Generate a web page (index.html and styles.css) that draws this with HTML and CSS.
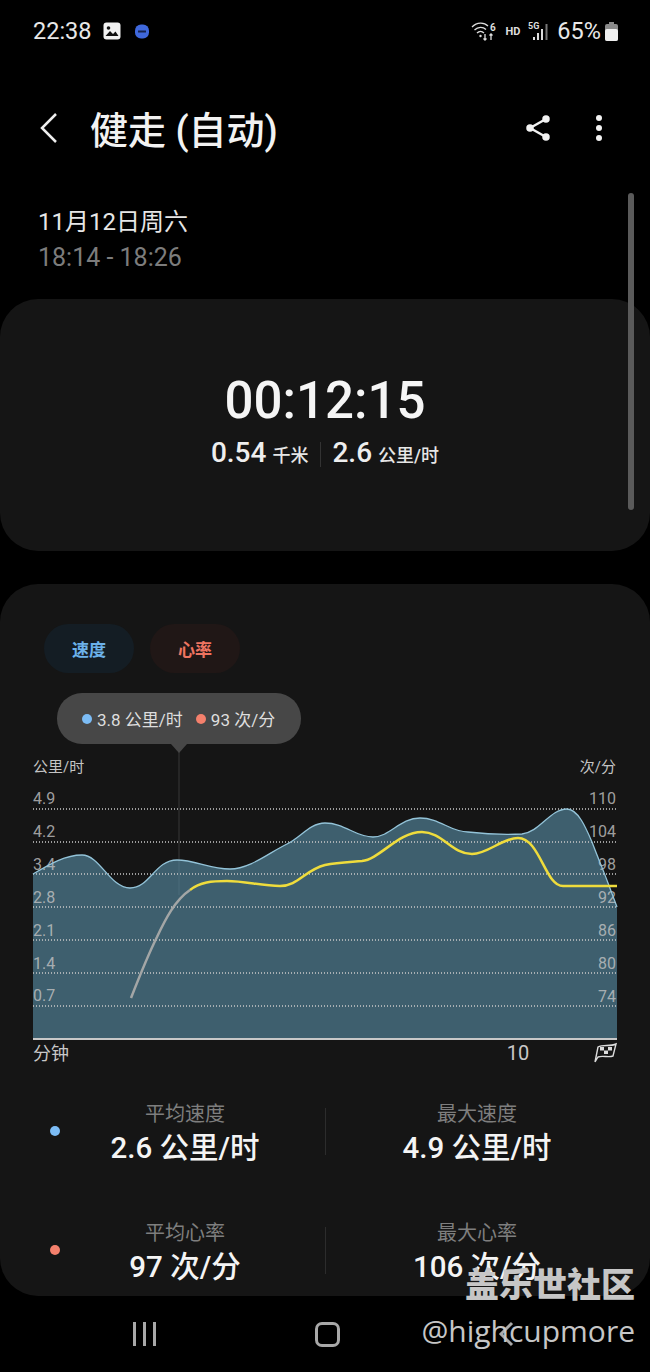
FILE: index.html
```html
<!DOCTYPE html>
<html lang="zh-CN">
<head>
    <meta charset="UTF-8">
    <meta name="viewport" content="width=device-width, initial-scale=1.0">
    <title>健走 (自动)</title>
    <link rel="stylesheet" href="styles.css">
</head>
<body>
    <div class="status-bar">
        <div class="status-left">
            <span class="status-text">22:38</span>
            <svg class="icon-gallery" width="18" height="18" viewBox="0 0 18 18">
                <rect x="0.5" y="0.5" width="17" height="17" rx="3" fill="#f2f2f2"/>
                <circle cx="5.5" cy="6" r="1.8" fill="#111"/>
                <path d="M2.5 14 L7 9 L10 12 L12.5 9.5 L15.5 14 Z" fill="#111"/>
            </svg>
            <svg class="icon-badge" width="14" height="15" viewBox="0 0 14 15">
                <rect x="0" y="0.5" width="14" height="14" rx="6" fill="#3f68dc"/>
                <rect x="3" y="6.5" width="8" height="2" fill="#16244f"/>
            </svg>
        </div>
        <div class="status-right">
            <svg width="25" height="20" viewBox="0 0 25 20" fill="none" stroke="#ddd" stroke-width="1.3">
                <path d="M1 6 C6 1 13 1 17 5"/>
                <path d="M3.5 9 C7 5.5 12 5.5 15 8.5"/>
                <path d="M6 12 C8 10 11 10 13 12"/>
                <circle cx="9.5" cy="15" r="1.2" fill="#ddd" stroke="none"/>
                <path d="M14 13 V19 M12.5 17.5 L14 19 L15.500 17.500"/>
                <path d="M20 19 V13 M18.500 14.500 L20 13 L21.500 14.500"/>
                <text class="wifi-six" x="19" y="10">6</text>
            </svg>
            <span class="status-hd">HD</span>
            <svg width="22" height="20" viewBox="0 0 22 20" fill="#ddd">
                <text class="signal-five" x="0" y="8">5G</text>
                <rect x="5" y="16" width="2" height="3"/>
                <rect x="9" y="12" width="2" height="7"/>
                <rect x="13" y="8" width="2" height="11"/>
                <rect x="17.500" y="3" width="2" height="16" fill="#777"/>
            </svg>
            <span class="status-text status-pct">65%</span>
            <svg width="13" height="19" viewBox="0 0 13 19">
                <rect x="4" y="0" width="5" height="3" fill="#8a8a8a"/>
                <rect x="0" y="2" width="13" height="17" rx="2" fill="#8a8a8a"/>
                <rect x="0" y="7" width="13" height="12" rx="2" fill="#efefef"/>
            </svg>
        </div>
    </div>

    <div class="app-header">
        <svg class="back-icon" width="18" height="32" viewBox="0 0 18 32" fill="none" stroke="#eee" stroke-width="2.500">
            <polyline points="16,2 2,16 16,30"/>
        </svg>
        <h1 class="title">健走 (自动)</h1>
        <svg class="share-icon" width="24" height="28" viewBox="0 0 24 28" fill="#f2f2f2" stroke="#f2f2f2" stroke-width="2.500">
            <line x1="20" y1="5" x2="4" y2="14"/>
            <line x1="4" y1="14" x2="20" y2="23"/>
            <circle cx="20" cy="5" r="2.500"/>
            <circle cx="4" cy="14" r="2.500"/>
            <circle cx="20" cy="23" r="2.500"/>
        </svg>
        <div class="more-icon"><i></i><i></i><i></i></div>
    </div>

    <div class="date-block">
        <div class="date-line">11月12日周六</div>
        <div class="time-line">18:14 - 18:26</div>
    </div>

    <div class="card summary-card">
        <div class="duration">00:12:15</div>
        <div class="summary-row">
            <span class="big-num">0.54</span><span class="small-unit">千米</span>
            <span class="summary-sep"></span>
            <span class="big-num">2.6</span><span class="small-unit">公里/时</span>
        </div>
    </div>

    <div class="card chart-card">
        <div class="pill-row">
            <span class="pill pill-speed">速度</span>
            <span class="pill pill-heart">心率</span>
        </div>

        <div class="chart-tip">
            <span class="dot dot-blue"></span><span class="tip-text">3.8 公里/时</span>
            <span class="dot dot-red tip-second"></span><span class="tip-text">93 次/分</span>
        </div>

        <svg class="chart" width="650" height="320" viewBox="0 750 650 320">
            <text class="axis-label" x="33" y="772">公里/时</text>
            <text class="axis-label" x="616" y="772" text-anchor="end">次/分</text>

            <line class="cursor-line" x1="179" y1="752" x2="179" y2="895"/>

            <path class="area-fill" d="M33 874 C50 864 65 855 82 855 C100 855 110 888 130 888 C150 888 155 860 177 860 C195 860 210 869 230 869 C250 869 270 852 287 844 C300 838 310 823 325 823 C345 823 355 837 373 837 C390 837 400 818 420 818 C440 818 450 832 468 832 C485 834 505 835 522 834 C540 832 550 809 567 809 C578 809 586 828 592 842 C598 858 604 872 608 883 L617 907 V1038 H33 Z"/>

            <g class="axis-label tick-label">
                <text x="33" y="804">4.9</text>
                <text x="33" y="837">4.2</text>
                <text x="33" y="870">3.4</text>
                <text x="33" y="903">2.8</text>
                <text x="33" y="936">2.1</text>
                <text x="33" y="969">1.4</text>
                <text x="33" y="1001">0.7</text>
            </g>
            <g class="axis-label tick-label" text-anchor="end">
                <text x="616" y="804">110</text>
                <text x="616" y="837">104</text>
                <text x="616" y="870">98</text>
                <text x="616" y="903">92</text>
                <text x="616" y="936">86</text>
                <text x="616" y="969">80</text>
                <text x="616" y="1002">74</text>
            </g>

            <g class="grid-lines">
                <line x1="33" y1="809" x2="617" y2="809"/>
                <line x1="33" y1="842" x2="617" y2="842"/>
                <line x1="33" y1="874" x2="617" y2="874"/>
                <line x1="33" y1="907" x2="617" y2="907"/>
                <line x1="33" y1="940" x2="617" y2="940"/>
                <line x1="33" y1="973" x2="617" y2="973"/>
                <line x1="33" y1="1006" x2="617" y2="1006"/>
            </g>

            <path class="area-line" d="M33 874 C50 864 65 855 82 855 C100 855 110 888 130 888 C150 888 155 860 177 860 C195 860 210 869 230 869 C250 869 270 852 287 844 C300 838 310 823 325 823 C345 823 355 837 373 837 C390 837 400 818 420 818 C440 818 450 832 468 832 C485 834 505 835 522 834 C540 832 550 809 567 809 C578 809 586 828 592 842 C598 858 604 872 608 883 L617 907"/>
            <path class="heart-grey" d="M131 998 C140 975 148 955 157 937 C165 920 175 900 190 890"/>
            <path class="heart-line" d="M190 890 C200 882 212 881 227 881 C245 881 262 886 280 886 C298 886 305 870 325 865 C338 862 350 862 362 861 C380 859 398 832 422 832 C442 832 452 854 472 854 C488 854 502 838 518 838 C540 838 545 886 563 886 H617"/>

            <line class="base-line" x1="33" y1="1039" x2="617" y2="1039"/>

            <text class="axis-x" x="33" y="1060">分钟</text>
            <text class="axis-x axis-ten" x="518" y="1060" text-anchor="middle">10</text>

            <g class="flag-icon">
                <path d="M598 1047 C603 1044 610 1047 616 1044 L613 1056 C608 1058 603 1055 598 1057 L595 1062 Z"/>
                <rect x="600" y="1047" width="4" height="3.500"/>
                <rect x="608" y="1047" width="4" height="3.500"/>
                <rect x="604" y="1050.500" width="4" height="3.500"/>
            </g>
        </svg>

        <div class="stat-row">
            <span class="dot dot-blue stat-dot"></span>
            <div class="stat">
                <div class="stat-label">平均速度</div>
                <div class="stat-value">2.6 公里/时</div>
            </div>
            <span class="stat-sep"></span>
            <div class="stat">
                <div class="stat-label">最大速度</div>
                <div class="stat-value">4.9 公里/时</div>
            </div>
        </div>
        <div class="stat-row">
            <span class="dot dot-red stat-dot"></span>
            <div class="stat">
                <div class="stat-label">平均心率</div>
                <div class="stat-value">97 次/分</div>
            </div>
            <span class="stat-sep"></span>
            <div class="stat">
                <div class="stat-label">最大心率</div>
                <div class="stat-value">106 次/分</div>
            </div>
        </div>
    </div>

    <div class="nav-bar">
        <div class="nav-recent"><i></i><i></i><i></i></div>
        <div class="nav-home"></div>
        <svg class="nav-back" width="16" height="26" viewBox="0 0 16 26" fill="none" stroke="#aaa" stroke-width="3">
            <polyline points="14,2 3,13 14,24"/>
        </svg>
    </div>

    <div class="scroll-thumb"></div>

    <div class="watermark">
        <div class="wm-title">盖乐世社区</div>
        <div class="wm-user">@highcupmore</div>
    </div>
</body>
</html>
```

FILE: styles.css
```css
body {
    font-family: 'Roboto', 'Noto Sans CJK SC', sans-serif;
    margin: 0;
    width: 650px;
    height: 1372px;
    overflow: hidden;
    position: relative;
    background: #000;
    color: #fff;
}
.status-bar {
    height: 62px;
    display: flex;
    justify-content: space-between;
    align-items: center;
    padding: 0 32px 0 33px;
}
.status-left, .status-right {
    display: flex;
    align-items: center;
}
.status-text {
    font-size: 23.500px;
    color: #e8e8e8;
}
.icon-gallery {
    margin-left: 11px;
}
.icon-badge {
    margin-left: 14px;
}
.status-hd {
    font-size: 11px;
    font-weight: 700;
    color: #ddd;
    margin: 0 8px 0 9px;
}
.status-pct {
    margin: 0 4px 0 7px;
}
.wifi-six {
    font-size: 10px;
    font-weight: 700;
    fill: #ddd;
    stroke: none;
}
.signal-five {
    font-size: 9px;
    font-weight: 700;
}

.app-header {
    height: 132px;
    display: flex;
    align-items: center;
    padding-left: 40px;
}
.title {
    margin: 0 0 2px 32px;
    font-size: 38px;
    font-weight: 500;
    color: #f2f2f2;
    flex: 1;
}
.share-icon {
    margin-right: 46px;
}
.more-icon {
    width: 6px;
    margin-right: 48px;
    display: flex;
    flex-direction: column;
    gap: 4px;
}
.more-icon i {
    width: 6px;
    height: 6px;
    border-radius: 50%;
    background: #f2f2f2;
}

.date-block {
    margin-top: 10px;
    padding-left: 38px;
    font-size: 24px;
    line-height: 36px;
}
.date-line {
    color: #e6e6e6;
}
.time-line {
    font-size: 25px;
    color: #7c7c7c;
}

.card {
    background: #151515;
    border-radius: 38px;
}
.summary-card {
    margin-top: 23px;
    height: 252px;
    display: flex;
    flex-direction: column;
    align-items: center;
    box-sizing: border-box;
    padding-top: 71px;
}
.duration {
    font-size: 51px;
    font-weight: 500;
    line-height: 62px;
    color: #f5f5f5;
}
.summary-row {
    display: flex;
    align-items: baseline;
    margin-top: 3px;
    line-height: 36px;
}
.big-num {
    font-size: 28px;
    font-weight: 500;
    color: #eee;
}
.small-unit {
    font-size: 18px;
    font-weight: 500;
    color: #e6e6e6;
    margin-left: 6px;
}
.summary-sep {
    align-self: center;
    width: 1px;
    height: 25px;
    background: #333;
    margin: 0 11px 0 12px;
}

.chart-card {
    margin-top: 33px;
    height: 712px;
    position: relative;
    box-sizing: border-box;
    padding-top: 40px;
}
.pill-row {
    display: flex;
    gap: 16px;
    padding-left: 44px;
}
.pill {
    width: 90px;
    height: 49px;
    border-radius: 25px;
    display: flex;
    align-items: center;
    justify-content: center;
    font-size: 17px;
    font-weight: 700;
}
.pill-speed {
    background: #141d24;
    color: #6cb2ea;
}
.pill-heart {
    background: #201716;
    color: #ee7461;
}
.chart-tip {
    position: absolute;
    left: 57px;
    top: 109px;
    width: 244px;
    height: 51px;
    box-sizing: border-box;
    padding-left: 25px;
    border-radius: 25px;
    background: #474747;
    display: flex;
    align-items: center;
    font-size: 17px;
    color: #dedede;
}
.chart-tip::after {
    content: "";
    position: absolute;
    left: 114px;
    top: 51px;
    border-left: 8px solid transparent;
    border-right: 8px solid transparent;
    border-top: 9px solid #474747;
}
.tip-text {
    margin-left: 5px;
    white-space: nowrap;
}
.tip-second {
    margin-left: 13px;
}
.dot {
    flex: none;
    width: 10px;
    height: 10px;
    border-radius: 50%;
}
.dot-blue {
    background: #7cbcf5;
}
.dot-red {
    background: #f4806c;
}
.chart {
    display: block;
    margin-top: 77px;
}
.axis-label {
    font-size: 15px;
    fill: #c4c4c4;
}
.tick-label {
    font-size: 16px;
    fill-opacity: 0.8;
}
.axis-x {
    font-size: 18px;
    fill: #c8c8c8;
}
.axis-ten {
    font-size: 20px;
}
.cursor-line {
    stroke: #383838;
    stroke-width: 1;
}
.area-fill {
    fill: #55879e;
    fill-opacity: 0.65;
}
.area-line {
    fill: none;
    stroke: #93c3d8;
    stroke-width: 1.300;
}
.grid-lines line {
    stroke: #c9c9c9;
    stroke-width: 1.500;
    stroke-dasharray: 1 2;
}
.heart-grey {
    fill: none;
    stroke: #a3a6a6;
    stroke-width: 2.500;
}
.heart-line {
    fill: none;
    stroke: #efdc3c;
    stroke-width: 2.500;
}
.base-line {
    stroke: #c8c8c8;
    stroke-width: 2;
}
.flag-icon path {
    fill: none;
    stroke: #dcdcdc;
    stroke-width: 1.400;
}
.flag-icon rect {
    fill: #dcdcdc;
}

.stat-row {
    display: grid;
    grid-template-columns: 60px 250px 30px 274px;
    align-items: center;
    height: 68px;
    margin-bottom: 51px;
}
.chart + .stat-row {
    margin-top: 26px;
}
.stat-dot {
    margin: 2px 0 0 50px;
}
.stat {
    text-align: center;
}
.stat-label {
    font-size: 20px;
    line-height: 36px;
    color: #7e7e7e;
}
.stat-value {
    font-size: 29.500px;
    font-weight: 500;
    line-height: 32px;
    color: #f4f4f4;
}
.stat-sep {
    justify-self: center;
    width: 1px;
    height: 47px;
    margin-top: 2px;
    background: #2c2c2c;
}

.nav-bar {
    height: 76px;
    display: flex;
    align-items: center;
    justify-content: space-between;
    padding: 0 136px 0 133px;
    box-sizing: border-box;
}
.nav-recent {
    display: flex;
    gap: 7px;
}
.nav-recent i {
    width: 3px;
    height: 24px;
    background: #a8a8a8;
}
.nav-home {
    width: 19px;
    height: 19px;
    border: 3px solid #a8a8a8;
    border-radius: 7px;
}
.scroll-thumb {
    position: absolute;
    left: 628px;
    top: 193px;
    width: 6px;
    height: 317px;
    border-radius: 3px;
    background: #5a5a5a;
}
.watermark {
    position: absolute;
    right: 15px;
    top: 1263px;
    text-align: right;
    color: #c6c6c6;
}
.wm-title {
    font-size: 34px;
    font-weight: 900;
    line-height: 44px;
}
.wm-user {
    font-family: 'Open Sans', sans-serif;
    font-size: 30px;
    line-height: 48px;
}
```
